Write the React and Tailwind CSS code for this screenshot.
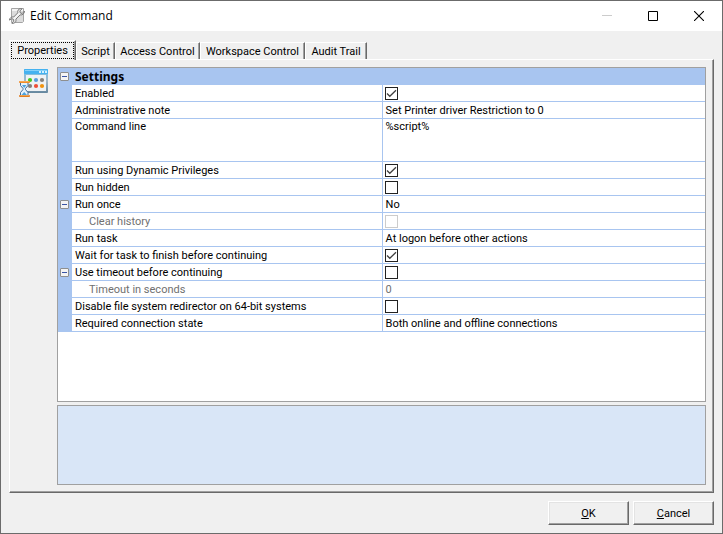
import { useState } from "react";

const tabs = [
  { name: "Properties", width: "w-[67px]" },
  { name: "Script", width: "w-[39px]" },
  { name: "Access Control", width: "w-[85px]" },
  { name: "Workspace Control", width: "w-[105px]" },
  { name: "Audit Trail", width: "w-[62px]" },
];

const settings = [
  { id: "enabled", label: "Enabled", type: "check", value: true },
  { id: "note", label: "Administrative note", value: "Set Printer driver Restriction to 0" },
  { id: "command", label: "Command line", value: "%script%", tall: true },
  { id: "privileges", label: "Run using Dynamic Privileges", type: "check", value: true },
  { id: "hidden", label: "Run hidden", type: "check", value: false },
  { id: "once", label: "Run once", value: "No", group: true },
  { id: "history", label: "Clear history", type: "check", value: false, child: true },
  { id: "task", label: "Run task", value: "At logon before other actions" },
  { id: "wait", label: "Wait for task to finish before continuing", type: "check", value: true },
  { id: "timeout", label: "Use timeout before continuing", type: "check", value: false, group: true },
  { id: "seconds", label: "Timeout in seconds", value: "0", child: true },
  { id: "redirector", label: "Disable file system redirector on 64-bit systems", type: "check", value: false },
  { id: "connection", label: "Required connection state", value: "Both online and offline connections" },
];

const ToolIcon = () => (
  <svg width="16" height="16" viewBox="0 0 16 16" aria-hidden="true">
    <path d="M2.500.5h12v13l-1 1h-11z" fill="#dcdcdc" stroke="#a4a4a4" />
    <path d="M3 1h11v2H3z" fill="#f4f4f4" />
    <path
      d="M15.500 3.200 13.200 5.500l-1.900-.6-.5-1.900L13 .8c-2-.6-4.200.6-4.300 2.700l.1 1.300L4.700 9C2.600 8.500.5 9.900.5 12.100l2.200-1.500 1.900.8.2 1.900-1.900 2c2.100.5 4.100-.9 4.100-3l-.1-1.200 4.200-4.200c2.300.5 4.300-1.300 4.400-3.700z"
      fill="#f3f3f3"
      stroke="#777"
      strokeLinejoin="round"
    />
  </svg>
);

const ScheduleIcon = () => (
  <svg width="30" height="30" viewBox="0 0 30 30" aria-hidden="true">
    <defs>
      <linearGradient id="frame" x1="0" y1="0" x2="0" y2="1">
        <stop offset="0" stopColor="#6cc0ee" />
        <stop offset="0.5" stopColor="#a3b8c8" />
        <stop offset="1" stopColor="#64879f" />
      </linearGradient>
    </defs>
    <rect x="5" y="0" width="24" height="24" rx="1" fill="url(#frame)" />
    <rect x="5" y="0" width="24" height="5" rx="1" fill="#45b2f0" />
    <path d="M6 1h22v1H6z" fill="#86d0f8" />
    <path d="M20 2h2v2h-2zM23 2h2v2h-2zM26 2h2v2h-2z" fill="#d3f0ff" />
    <rect x="7" y="6" width="20" height="16" fill="#eef2f5" />
    <circle cx="11" cy="11" r="2.100" fill="#45c922" />
    <circle cx="17" cy="11" r="2.100" fill="#5a9fdb" />
    <circle cx="23" cy="11" r="2.100" fill="#85817d" />
    <circle cx="11" cy="17" r="2.100" fill="#85817d" />
    <circle cx="17" cy="17" r="2.100" fill="#ee5038" />
    <circle cx="23" cy="17" r="2.100" fill="#f0930f" />
    <path
      d="M1.500 13h7.500v3.500L6.500 19.500v1l2.500 3v3H1.500v-3l2.500-3v-1L1.500 16.500z"
      fill="#e4f1fb"
      stroke="#426f9e"
    />
    <path d="M3 16h4.500L5.200 19zM2.500 26l2.700-3 2.800 3z" fill="#4aa3e0" />
    <rect x="0" y="12" width="11" height="2" rx="1" fill="#f08a24" />
    <rect x="0" y="26" width="11" height="2" rx="1" fill="#e07a1c" />
    <path d="M1 12.600h9M1 26.600h9" stroke="#fcc27c" strokeWidth="0.6" />
  </svg>
);

const Expander = ({ label, ...props }) => (
  <button
    type="button"
    aria-label={label}
    className="ml-[2px] flex size-[9px] items-center justify-center rounded-[1px] border border-[#8e8f8f] bg-[#f4f4f4]"
    {...props}
  >
    <span className="h-px w-[5px] bg-[#3a55a5]" />
  </button>
);

const CheckBox = ({ id, checked, disabled, onChange }) => (
  <span className="relative block size-[13px]">
    <input
      id={id}
      type="checkbox"
      checked={checked}
      disabled={disabled}
      onChange={onChange}
      className="peer block size-[13px] appearance-none border border-[#222] bg-white disabled:border-[#ccc]"
    />
    <svg
      viewBox="0 0 13 13"
      className="pointer-events-none absolute inset-0 hidden size-[13px] peer-checked:block"
      aria-hidden="true"
    >
      <path d="M2 6.500 4.800 9.300 11 3.200" fill="none" stroke="#404040" strokeWidth="1.300" />
    </svg>
  </span>
);

const SettingsTable = () => {
  const [values, setValues] = useState(
    Object.fromEntries(settings.map((item) => [item.id, item.value]))
  );
  const [open, setOpen] = useState(true);

  return (
    <table className="w-full table-fixed border-separate border-spacing-0 text-left leading-[14px]">
      <colgroup>
        <col className="w-[14px]" />
        <col className="w-[48%]" />
        <col />
      </colgroup>
      <thead>
        <tr className="h-[17px] bg-[#a8c5f0]">
          <td className="p-0">
            <Expander label="Toggle Settings" onClick={() => setOpen(!open)} />
          </td>
          <th
            colSpan={2}
            className="p-0 pl-[3px] font-['Noto_Sans',sans-serif] text-[12px] leading-4 font-bold"
          >
            Settings
          </th>
        </tr>
      </thead>
      {open && (
        <tbody>
          {settings.map((item) => (
            <tr
              key={item.id}
              className={`align-top ${item.tall ? "h-[43px]" : "h-[17px]"} ${
                item.child ? "text-[#707070]" : ""
              }`}
            >
              <td className="bg-[#a8c5f0] p-0 pt-1">
                {item.group && <Expander label={`Toggle ${item.label}`} />}
              </td>
              <th
                scope="row"
                className={`truncate border-r border-b border-[#a8c5f0] p-0 font-normal ${
                  item.child ? "pl-[17px]" : "pl-[3px]"
                } ${item.tall ? "pt-px" : "pt-[2px]"}`}
              >
                {item.type === "check" ? (
                  <label htmlFor={item.id}>{item.label}</label>
                ) : (
                  item.label
                )}
              </th>
              <td
                className={`truncate border-b border-[#a8c5f0] p-0 ${
                  item.type === "check" ? "pl-[2px]" : "pl-[3px]"
                } ${item.tall ? "pt-px" : "pt-[2px]"}`}
              >
                {item.type === "check" ? (
                  <CheckBox
                    id={item.id}
                    checked={values[item.id]}
                    disabled={item.child}
                    onChange={(e) =>
                      setValues({ ...values, [item.id]: e.target.checked })
                    }
                  />
                ) : (
                  item.value
                )}
              </td>
            </tr>
          ))}
        </tbody>
      )}
    </table>
  );
};

const DialogButton = ({ children }) => (
  <button
    type="button"
    className="h-6 w-[81px] border border-t-white border-r-[#696969] border-b-[#696969] border-l-white bg-[#f0f0f0] pt-px shadow-[inset_-1px_-1px_0_#a0a0a0,inset_1px_1px_0_#e3e3e3]"
  >
    {children}
  </button>
);

const App = () => {
  const [active, setActive] = useState("Properties");

  return (
    <div className="flex min-h-screen flex-col border border-[#6b6b6b] bg-[#f0f0f0] font-[Roboto,sans-serif] text-[11px] leading-4 text-black">
      <header className="flex h-[30px] items-center bg-white pl-2">
        <ToolIcon />
        <h1 className="ml-[5px] flex-1 font-['Open_Sans',sans-serif] text-[12px]">
          Edit Command
        </h1>
        <button type="button" aria-label="Minimize" className="flex w-[46px] justify-center" disabled>
          <svg width="10" height="10" viewBox="0 0 10 10">
            <path d="M0 4.500h10" stroke="#ccc" />
          </svg>
        </button>
        <button type="button" aria-label="Maximize" className="flex w-[46px] justify-center">
          <svg width="10" height="10" viewBox="0 0 10 10">
            <path d="M.5.5h9v9h-9z" fill="none" stroke="#000" />
          </svg>
        </button>
        <button type="button" aria-label="Close" className="flex w-[46px] justify-center">
          <svg width="10" height="10" viewBox="0 0 10 10">
            <path d="M0 0l10 10M10 0L0 10" stroke="#000" strokeWidth="1.100" />
          </svg>
        </button>
      </header>

      <main className="flex flex-1 flex-col px-2 pt-[9px] pb-2">
        <div role="tablist" className="flex items-end">
          {tabs.map((tab) => {
            const selected = tab.name === active;
            return (
              <button
                key={tab.name}
                type="button"
                role="tab"
                aria-selected={selected}
                onClick={() => setActive(tab.name)}
                className={`${tab.width} border-t border-l border-white border-r border-r-[#696969] bg-[#f0f0f0] whitespace-nowrap shadow-[inset_-1px_0_0_#a0a0a0] ${
                  selected ? "relative -mb-px h-5 p-px" : "h-[17px] pt-[2px] leading-[14px]"
                }`}
              >
                {selected ? (
                  <span className="block h-[17px] border border-dotted border-black">
                    {tab.name}
                  </span>
                ) : (
                  tab.name
                )}
              </button>
            );
          })}
        </div>

        <section className="flex flex-1 border border-t-white border-r-[#696969] border-b-[#696969] border-l-white px-[7px] pt-[7px] pb-[7px] shadow-[inset_-1px_-1px_0_#a0a0a0]">
          <div className="w-10 shrink-0 pt-[2px] pl-[2px]">
            <ScheduleIcon />
          </div>
          <div className="flex min-w-0 flex-1 flex-col gap-[3px]">
            <div className="flex-1 border border-[#a0a0a0] bg-white">
              <SettingsTable />
            </div>
            <div className="h-20 border border-[#a0a0a0] bg-[#d9e6f7]" />
          </div>
        </section>

        <footer className="mt-2 flex justify-end gap-1">
          <DialogButton>
            <u>O</u>K
          </DialogButton>
          <DialogButton>
            <u>C</u>ancel
          </DialogButton>
        </footer>
      </main>
    </div>
  );
};

export default App;
